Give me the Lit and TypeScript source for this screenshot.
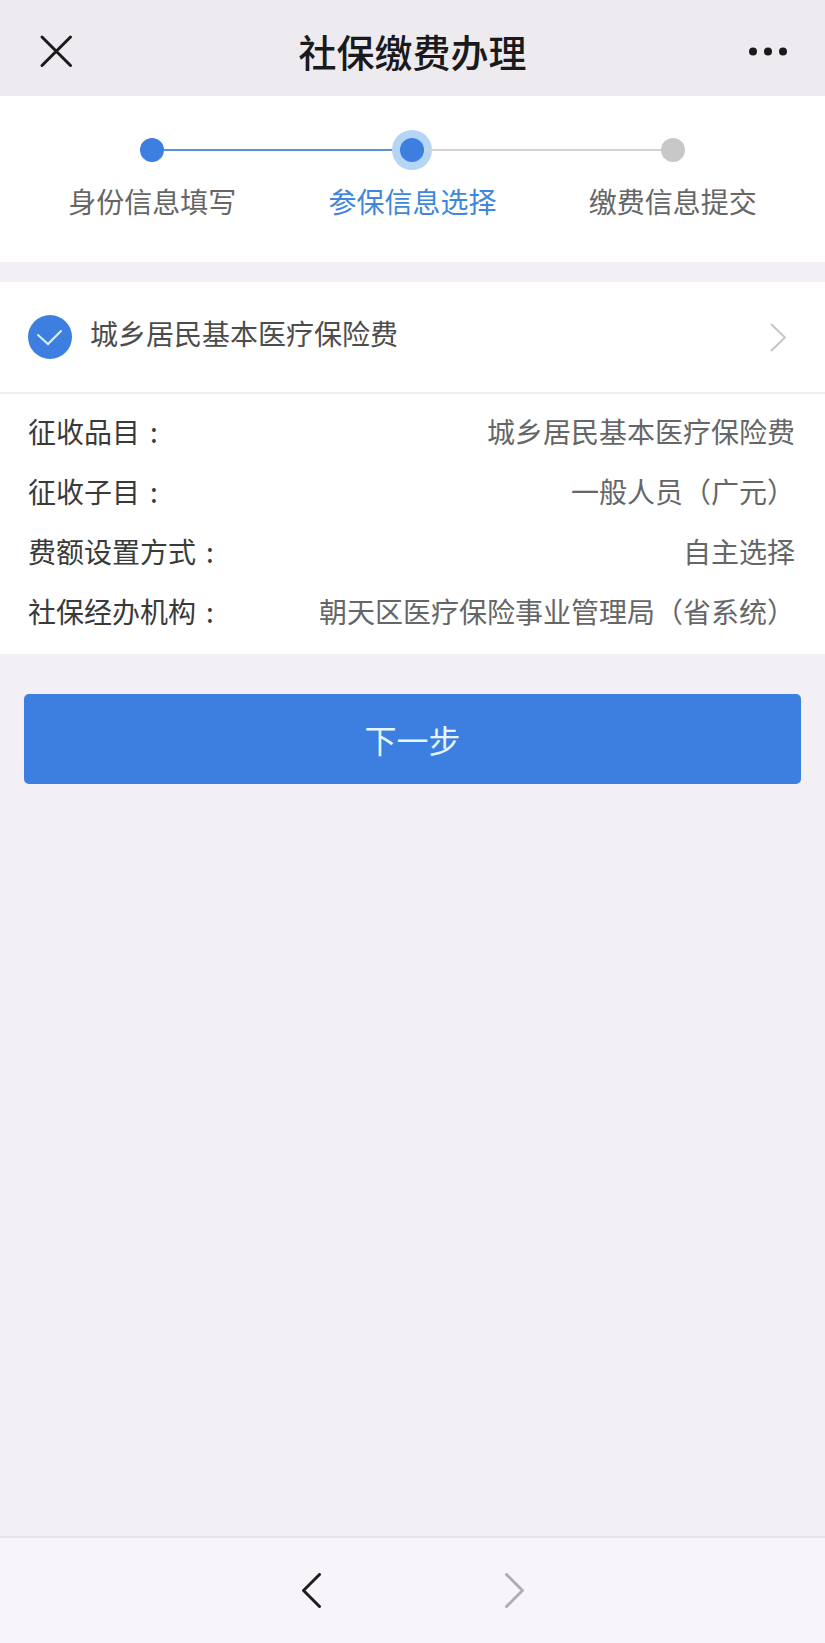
import { LitElement, html, css, svg } from "lit";
import { customElement, property, state } from "lit/decorators.js";
import { classMap } from "lit/directives/class-map.js";

type Step = { label: string };
type Detail = { name: string; value: string };

const STEPS: Step[] = [
  { label: "身份信息填写" },
  { label: "参保信息选择" },
  { label: "缴费信息提交" },
];

const DETAILS: Detail[] = [
  { name: "征收品目", value: "城乡居民基本医疗保险费" },
  { name: "征收子目", value: "一般人员（广元）" },
  { name: "费额设置方式", value: "自主选择" },
  { name: "社保经办机构", value: "朝天区医疗保险事业管理局（省系统）" },
];

const chevronLeft = svg`<path d="M17.5 1.5 1.5 17.5l16 16" />`;
const chevronRight = svg`<path d="m1.5 1.5 16 16-16 16" />`;

@customElement("title-bar")
class TitleBar extends LitElement {
  @property() heading = "";

  static styles = css`
    :host {
      display: block;
      background: #edebef;
      color: #1a191c;
    }
    .bar {
      display: grid;
      grid-template-columns: 1fr auto 1fr;
      align-items: center;
      height: 96px;
      box-sizing: border-box;
      padding: 6px 36px 0;
    }
    h1 {
      margin: 0;
      font-size: 38px;
      font-weight: 500;
      line-height: 48px;
    }
    button {
      display: flex;
      padding: 4px 0;
      border: 0;
      background: none;
      color: inherit;
      cursor: pointer;
    }
    .close {
      justify-self: start;
    }
    .more {
      justify-self: end;
    }
    .cross {
      fill: none;
      stroke: currentColor;
      stroke-width: 3;
      stroke-linecap: round;
    }
    .dots {
      fill: currentColor;
    }
  `;

  render() {
    return html`
      <header class="bar">
        <button class="close" aria-label="关闭">
          <svg class="cross" width="40" height="40" viewBox="0 0 40 40">
            <path d="M6 6 34.5 34.5M34.5 6 6 34.5" />
          </svg>
        </button>
        <h1>${this.heading}</h1>
        <button class="more" aria-label="更多">
          <svg class="dots" width="40" height="40" viewBox="0 0 40 40">
            <circle cx="4" cy="20.5" r="4" />
            <circle cx="19" cy="20.5" r="4" />
            <circle cx="34" cy="20.5" r="4" />
          </svg>
        </button>
      </header>
    `;
  }
}

@customElement("step-progress")
class StepProgress extends LitElement {
  @property({ type: Array }) steps: Step[] = [];
  @property({ type: Number }) current = 0;

  static styles = css`
    :host {
      display: block;
      background: #fff;
    }
    ol {
      display: grid;
      grid-template-columns: repeat(3, 1fr);
      margin: 0;
      padding: 34px 22px 41px;
      list-style: none;
    }
    .step {
      color: #666;
      text-align: center;
      font-size: 28px;
      line-height: 40px;
    }
    .track {
      display: grid;
      grid-template-columns: 1fr auto 1fr;
      align-items: center;
      height: 40px;
      margin-bottom: 11px;
    }
    .line {
      height: 2px;
      background: #d3d3d3;
    }
    .line.passed {
      background: #5594d6;
    }
    .line.none {
      background: none;
    }
    .dot {
      width: 24px;
      height: 24px;
      border-radius: 50%;
      background: #c8c8c8;
    }
    .done .dot,
    .active .dot {
      background: #3d7fe0;
    }
    .active .dot {
      box-shadow: 0 0 0 8px #b5d5f5;
    }
    .active {
      color: #3f86dc;
    }
  `;

  render() {
    const last = this.steps.length - 1;
    return html`
      <ol>
        ${this.steps.map(
          (step, i) => html`
            <li
              class=${classMap({
                step: true,
                done: i < this.current,
                active: i === this.current,
              })}
            >
              <div class="track">
                <span
                  class=${classMap({ line: true, none: i === 0, passed: i <= this.current })}
                ></span>
                <span class="dot"></span>
                <span
                  class=${classMap({ line: true, none: i === last, passed: i < this.current })}
                ></span>
              </div>
              <span>${step.label}</span>
            </li>
          `,
        )}
      </ol>
    `;
  }
}

@customElement("insurance-card")
class InsuranceCard extends LitElement {
  @property() heading = "";
  @property({ type: Array }) details: Detail[] = [];
  @state() private selected = true;

  static styles = css`
    :host {
      display: block;
      background: #fff;
      font-size: 28px;
      line-height: 40px;
    }
    .head {
      display: flex;
      align-items: center;
      height: 112px;
      box-sizing: border-box;
      padding: 0 36px 0 28px;
      border-bottom: 2px solid #efeff0;
    }
    .tick {
      display: grid;
      flex: none;
    }
    .tick > * {
      grid-area: 1 / 1;
    }
    input {
      appearance: none;
      width: 44px;
      height: 44px;
      margin: 0;
      border-radius: 50%;
      background: #d3d3d3;
    }
    input:checked {
      background: #3d7fe0;
    }
    .tick svg {
      fill: none;
      stroke: #d8f1ff;
      stroke-width: 2;
      stroke-linecap: round;
      pointer-events: none;
    }
    label {
      flex: 1;
      padding: 0 0 8px 18px;
      color: #4c4c4c;
    }
    .open {
      display: flex;
      padding: 0;
      border: 0;
      background: none;
      cursor: pointer;
    }
    .open svg {
      fill: none;
      stroke: #c6c6c6;
      stroke-width: 2;
    }
    dl {
      margin: 0;
      padding: 7px 30px 13px 28px;
    }
    .row {
      display: flex;
      justify-content: space-between;
      gap: 16px;
      padding: 10px 0;
    }
    dt {
      flex: none;
      color: #3a3a3a;
    }
    .colon {
      margin-left: 10px;
    }
    dd {
      margin: 0;
      color: #666;
      text-align: right;
    }
  `;

  private toggle(e: Event) {
    this.selected = (e.target as HTMLInputElement).checked;
  }

  render() {
    return html`
      <div class="head">
        <span class="tick">
          <input type="checkbox" id="item" .checked=${this.selected} @change=${this.toggle} />
          <svg width="44" height="44" viewBox="0 0 44 44" aria-hidden="true">
            <path d="m10 20 10 9 13-13" />
          </svg>
        </span>
        <label for="item">${this.heading}</label>
        <button class="open" aria-label="查看详情">
          <svg width="20" height="30" viewBox="0 0 20 30">
            <path d="m2 2 14 13.5L2 29" />
          </svg>
        </button>
      </div>
      <dl>
        ${this.details.map(
          (d) => html`
            <div class="row">
              <dt>${d.name}<span class="colon">:</span></dt>
              <dd>${d.value}</dd>
            </div>
          `,
        )}
      </dl>
    `;
  }
}

@customElement("browser-nav")
class BrowserNav extends LitElement {
  static styles = css`
    :host {
      display: block;
    }
    nav {
      display: flex;
      justify-content: center;
      align-items: center;
      gap: 184px;
      height: 107px;
      box-sizing: border-box;
      border-top: 2px solid #e6e4e8;
      background: #f7f5f9;
    }
    button {
      display: flex;
      padding: 0;
      border: 0;
      background: none;
      color: #1d1c1f;
      cursor: pointer;
    }
    button:disabled {
      color: #aeadb1;
      cursor: default;
    }
    svg {
      fill: none;
      stroke: currentColor;
      stroke-width: 3;
      stroke-linecap: round;
    }
  `;

  render() {
    return html`
      <nav>
        <button aria-label="后退">
          <svg width="19" height="35" viewBox="0 0 19 35">${chevronLeft}</svg>
        </button>
        <button aria-label="前进" disabled>
          <svg width="19" height="35" viewBox="0 0 19 35">${chevronRight}</svg>
        </button>
      </nav>
    `;
  }
}

@customElement("app-root")
class AppRoot extends LitElement {
  static styles = css`
    :host {
      display: flex;
      flex-direction: column;
      min-height: 100vh;
      background: #f2f0f4;
      font-family: "Noto Sans CJK SC", sans-serif;
    }
    main {
      display: flex;
      flex: 1;
      flex-direction: column;
    }
    insurance-card {
      margin-top: 20px;
    }
    .next {
      height: 90px;
      margin: 40px 24px;
      border: 0;
      border-radius: 5px;
      background: #3d7fe0;
      color: #e4f6ff;
      font-family: inherit;
      font-size: 32px;
      line-height: 48px;
      cursor: pointer;
    }
  `;

  render() {
    return html`
      <title-bar heading="社保缴费办理"></title-bar>
      <main>
        <step-progress .steps=${STEPS} .current=${1}></step-progress>
        <insurance-card heading="城乡居民基本医疗保险费" .details=${DETAILS}></insurance-card>
        <button class="next">下一步</button>
      </main>
      <browser-nav></browser-nav>
    `;
  }
}
